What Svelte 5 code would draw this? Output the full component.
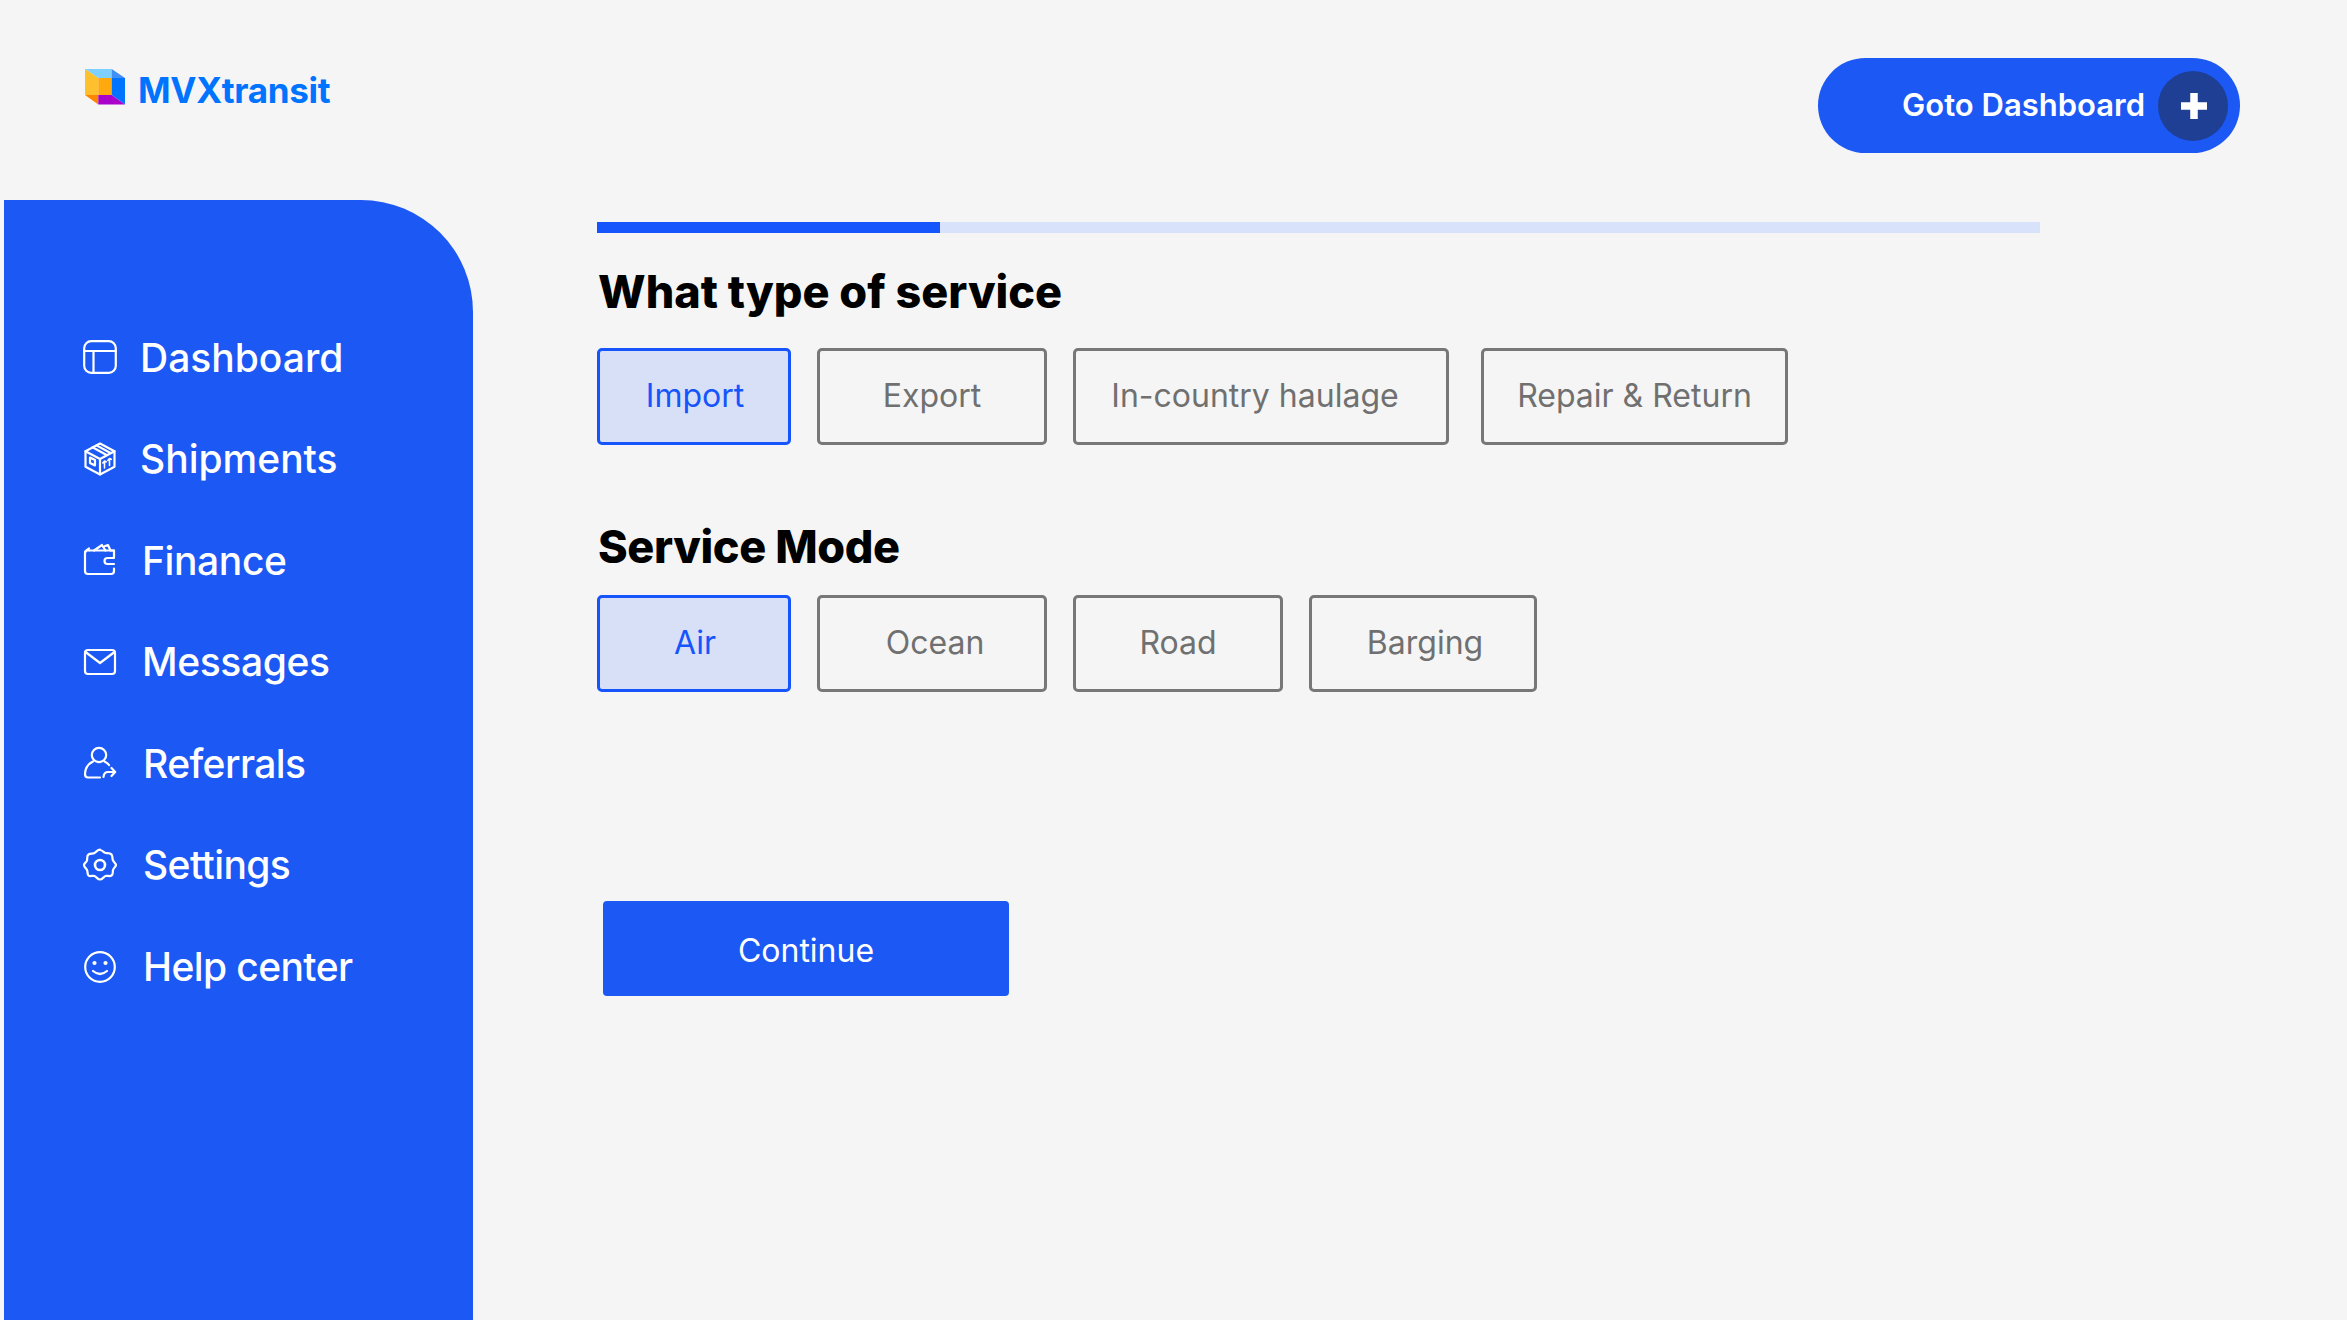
<script>
  const navItems = [
    { label: "Dashboard", icon: "dashboard", tier: "" },
    { label: "Shipments", icon: "box", tier: "" },
    { label: "Finance", icon: "wallet", tier: "mid" },
    { label: "Messages", icon: "mail", tier: "mid" },
    { label: "Referrals", icon: "person", tier: "far" },
    { label: "Settings", icon: "gear", tier: "far" },
    { label: "Help center", icon: "smile", tier: "far" },
  ];

  const serviceTypes = [
    { label: "Import", size: "first", active: true },
    { label: "Export", size: "second" },
    { label: "In-country haulage", size: "haulage" },
    { label: "Repair & Return", size: "repair" },
  ];

  const serviceModes = [
    { label: "Air", size: "first", active: true },
    { label: "Ocean", size: "ocean" },
    { label: "Road", size: "road" },
    { label: "Barging", size: "barging" },
  ];
</script>

{#snippet choice(option)}
  <button class="choice {option.size}" class:active={option.active}>{option.label}</button>
{/snippet}

<div class="page">
  <header class="topbar">
    <div class="logo">
      <svg width="40" height="36" viewBox="0 0 40 36">
        <polygon points="0,0 26.7,0 26.7,9 13.3,9" fill="#7dd0ff" />
        <polygon points="26.7,0 40,9 26.7,9" fill="#3f8ff5" />
        <polygon points="0,0 13.3,9 13.3,26 0,26" fill="#ffc02e" />
        <rect x="13.3" y="9" width="13.4" height="17" fill="#ffa90f" />
        <polygon points="26.7,9 40,9 40,35.5 26.7,26" fill="#0073ff" />
        <polygon points="0,26 13.3,26 13.3,35.5" fill="#ff8500" />
        <polygon points="13.3,26 26.7,26 40,35.5 13.3,35.5" fill="#aa00cc" />
      </svg>
      <span>MVXtransit</span>
    </div>
    <button class="goto">
      <span class="goto-label">Goto Dashboard</span>
      <span class="plus">
        <svg width="26" height="26" viewBox="0 0 26 26"><path d="M13 0v26M0 13h26" stroke="#fff" stroke-width="7.5" /></svg>
      </span>
    </button>
  </header>

  <aside class="sidebar">
    <nav>
      {#each navItems as item}
        <a class="nav-item {item.tier}" href="#{item.icon}">
          <svg width="34" height="34" viewBox="0 0 34 34" fill="none" stroke="#fff" stroke-width="2.2" stroke-linecap="round" stroke-linejoin="round">
            {#if item.icon == "dashboard"}
              <rect x="1.2" y="1.2" width="31.6" height="31.6" rx="7" />
              <path d="M1.2 11h31.6M10.5 11v21.8" />
            {:else if item.icon == "box"}
              <path d="M17 1.5 31.5 9.2v15.6L17 32.5 2.5 24.8V9.2z" />
              <path d="M2.5 9.2 17 17l14.500-7.800M17 17v15.500M9.500 5.300 24 13.200M13.500 3.400 27.500 11" />
              <path d="M7 15.500l5 2.600v5.400l-5-2.600z" />
              <path d="M21.500 26v-6.500M19.800 21l1.700-2 1.700 .8M26.500 23.500v-6.500M24.800 18.500l1.700-2 1.700 .8" stroke-width="1.600" />
            {:else if item.icon == "wallet"}
              <path d="M6 7.500H4.500Q2 7.500 2 10v18q0 3 3 3h23q3 0 3-3v-2.500" />
              <path d="M2 10q0-2 4-4.500M11 7.500 19 2l3.500 5.500M22 3l3-1 2.500 5.500H31V14" />
              <path d="M31 15h-6.500a2.500 2.500 0 0 0 0 6H31" />
              <path d="M6.500 7.500H31" />
            {:else if item.icon == "mail"}
              <rect x="2" y="5" width="30" height="24" rx="3" />
              <path d="M2.500 7 17 18 31.500 7" />
            {:else if item.icon == "person"}
              <circle cx="16" cy="9" r="7.200" />
              <path d="M10 15.500C5 18 2 23 2 28q0 3.500 3 3.500h12M21.500 15.500c2 1 3.500 2 4.500 3.500" />
              <path d="M32 26h-7q-4 0-4.500 5M28.500 22l3.700 4-3.700 4" />
            {:else if item.icon == "gear"}
              <path d="M17 2c2.500 0 3.500 2.500 5.500 3s4.500-.5 6 1.500 .5 4 1.500 6 3 3 3 4.500-2.500 3-3 5 .5 4-1.500 5.500-4-.3-6 .5-3 3.500-5.500 3.500-3.500-2.700-5.500-3.500-4.500 1-6-.5-.5-3.500-1.500-5.500-3-3-3-5 2.500-2.500 3-4.500-.5-4.500 1.500-6 4-.5 6-1.500 3-3.500 5.500-3.500z" />
              <circle cx="17" cy="17" r="5" stroke-width="2.600" />
            {:else}
              <circle cx="17" cy="17" r="14.800" />
              <circle cx="11.500" cy="13" r="1" fill="#fff" />
              <circle cx="22.500" cy="13" r="1" fill="#fff" />
              <path d="M10 21q7 6 14 0" />
            {/if}
          </svg>
          <span>{item.label}</span>
        </a>
      {/each}
    </nav>
  </aside>

  <main class="content">
    <div class="progress"><div class="progress-fill"></div></div>

    <h2 class="first-title">What type of service</h2>
    <div class="choices">
      {#each serviceTypes as option}
        {@render choice(option)}
      {/each}
    </div>

    <h2 class="second-title">Service Mode</h2>
    <div class="choices">
      {#each serviceModes as option}
        {@render choice(option)}
      {/each}
    </div>

    <button class="continue">Continue</button>
  </main>
</div>

<style>
  :global(body) {
    background: #f5f5f5;
    font-family: Inter, "Noto Sans", sans-serif;
  }

  .page {
    width: 2347px;
    height: 1320px;
    display: grid;
    grid-template-columns: 473px 1fr;
    grid-template-rows: 200px 1fr;
    overflow: hidden;
  }

  .topbar {
    grid-column: 1 / 3;
    display: flex;
    justify-content: space-between;
    align-items: flex-start;
    padding: 58px 107px 0 85px;
  }

  .logo {
    display: flex;
    align-items: center;
    gap: 13px;
    margin-top: 11px;
    height: 36px;
    color: #0073ff;
    font-size: 35px;
    font-weight: 700;
  }

  .logo span {
    position: relative;
    top: 3px;
    letter-spacing: -0.3px;
  }

  button {
    font-family: inherit;
    cursor: pointer;
  }

  .goto {
    width: 422px;
    height: 95px;
    border: none;
    border-radius: 48px;
    background: #1c58f4;
    color: #fff;
    font-size: 31px;
    font-weight: 600;
    display: flex;
    align-items: center;
    justify-content: flex-end;
    gap: 13px;
    padding: 0 12px 0 0;
  }

  .goto-label {
    margin-bottom: 2px;
  }

  .plus {
    width: 70px;
    height: 70px;
    border-radius: 50%;
    background: #1e3f94;
    display: flex;
    align-items: center;
    justify-content: center;
    padding-left: 2px;
    box-sizing: border-box;
  }

  .sidebar {
    margin-left: 4px;
    background: #1c58f4;
    border-top-right-radius: 112px;
  }

  nav {
    display: flex;
    flex-direction: column;
    padding: 131px 0 0 79px;
    gap: 49.6px;
  }

  .nav-item {
    display: flex;
    align-items: center;
    gap: 23px;
    height: 52px;
    color: #fff;
    text-decoration: none;
    font-size: 39px;
    font-weight: 500;
  }

  .nav-item.mid {
    gap: 25px;
    letter-spacing: -0.4px;
  }

  .nav-item.far {
    gap: 26px;
    letter-spacing: -0.6px;
  }

  .content {
    padding: 22px 0 0 124px;
  }

  .progress {
    width: 1443px;
    height: 11px;
    background: #d8e2fb;
  }

  .progress-fill {
    width: 343px;
    height: 100%;
    background: #1555fb;
  }

  h2 {
    margin: 0 0 0 1px;
    color: #000;
    font-size: 45px;
    line-height: 56px;
    font-weight: 800;
  }

  .first-title {
    margin-top: 31px;
    margin-bottom: 28px;
  }

  .second-title {
    margin-top: 74px;
    margin-bottom: 20px;
    letter-spacing: -0.4px;
  }

  .choices {
    display: flex;
    gap: 26px;
  }

  .choice {
    height: 97px;
    border: 3px solid #777;
    border-radius: 5px;
    background: transparent;
    color: #707070;
    font-size: 32px;
    font-weight: 400;
    padding: 0 0 3px;
  }

  .choice.active {
    border-color: #1555fb;
    background: #d8e0f7;
    color: #1555fb;
  }

  .first {
    width: 194px;
    padding-left: 2px;
  }

  .second {
    width: 230px;
  }

  .ocean {
    width: 230px;
    padding-left: 6px;
  }

  .haulage {
    width: 376px;
    padding-right: 12px;
  }

  .repair {
    width: 307px;
    margin-left: 6px;
  }

  .road {
    width: 210px;
  }

  .barging {
    width: 228px;
    padding-left: 4px;
  }

  .continue {
    display: block;
    width: 406px;
    height: 95px;
    margin: 209px 0 0 6px;
    border: none;
    border-radius: 4px;
    background: #1c58f4;
    color: #fff;
    font-size: 32px;
    padding: 3px 0 0;
  }
</style>
